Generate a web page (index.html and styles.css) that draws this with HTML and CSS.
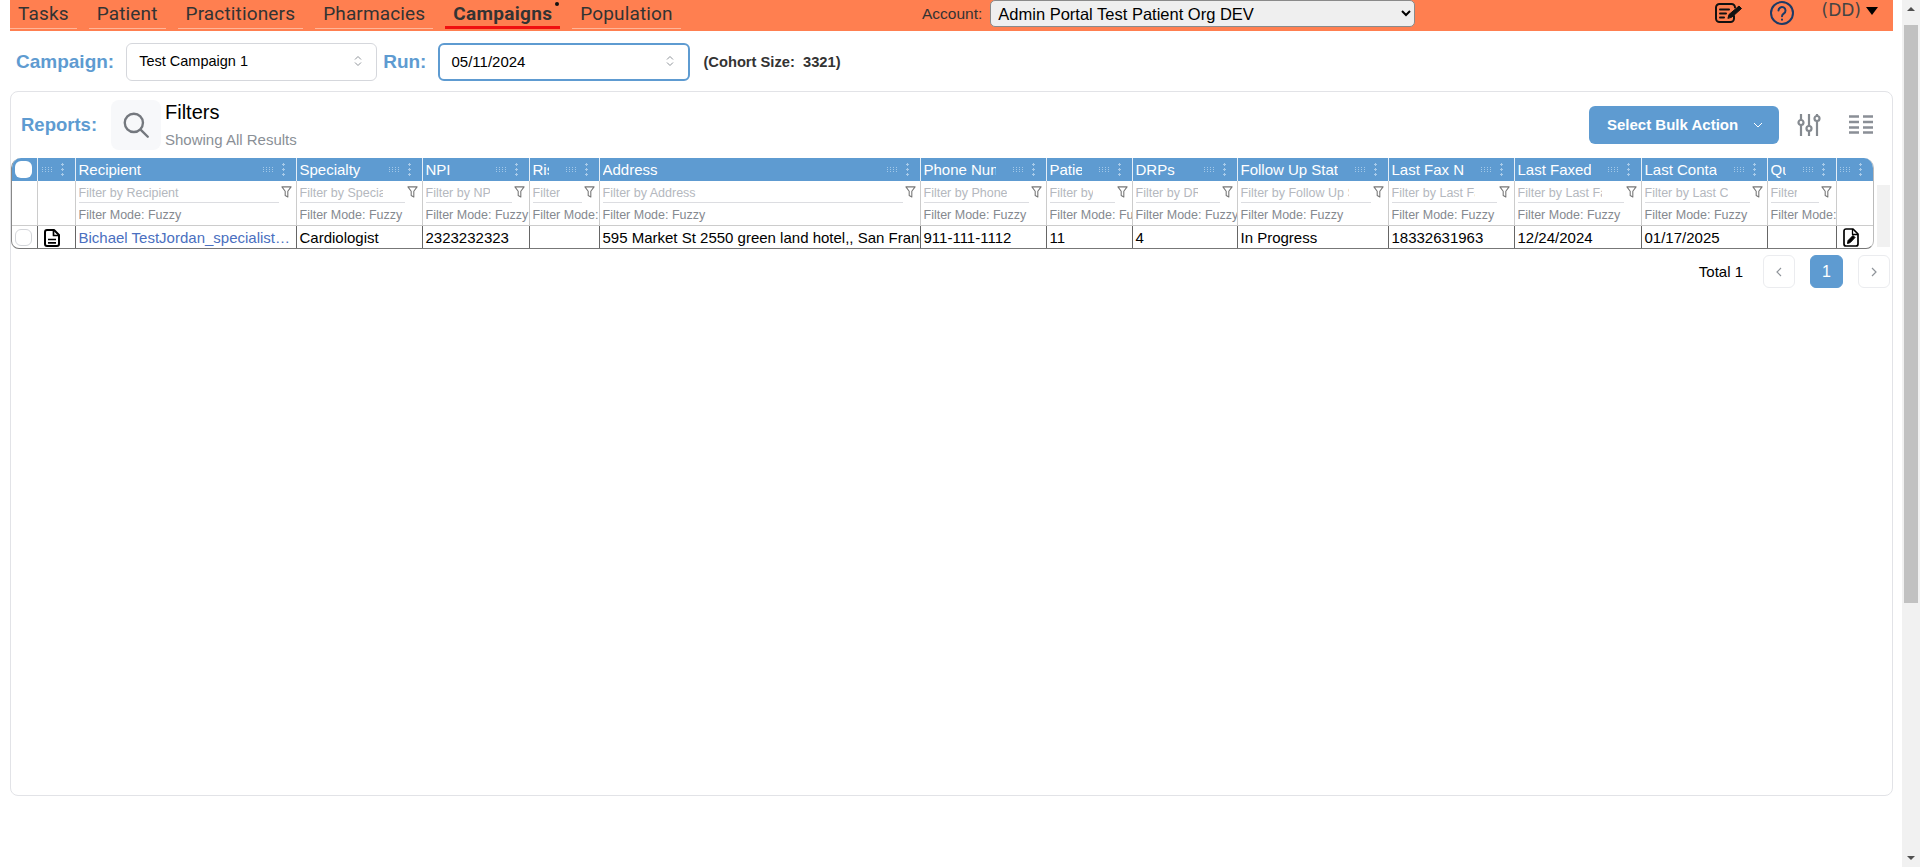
FILE: index.html
```html
<!DOCTYPE html>
<html lang="en">

<head>
  <meta charset="utf-8">
  <title>Campaigns</title>
  <link rel="icon" href="data:,">
  <link rel="stylesheet" href="styles.css">
</head>

<body>
  <svg class="defs" width="0" height="0" aria-hidden="true">
    <symbol id="funnel" viewBox="0 0 10 11">
      <path d="M.8.8H9.200L6.200 4.800V10L3.800 8.800V4.800z" fill="none" stroke="#777" stroke-width="1" stroke-linejoin="round" />
    </symbol>
  </svg>

  <div class="page">
    <div class="main">
      <header class="topbar">
        <nav class="nav">
          <a class="nav-link">Tasks</a>
          <a class="nav-link">Patient</a>
          <a class="nav-link">Practitioners</a>
          <a class="nav-link">Pharmacies</a>
          <a class="nav-link active">Campaigns<span class="nav-dot"></span></a>
          <a class="nav-link">Population</a>
        </nav>
        <div class="account">
          <label for="account-select">Account:</label>
          <select id="account-select">
            <option>Admin Portal Test Patient Org DEV</option>
          </select>
        </div>
        <div class="top-icons">
          <svg class="icon-note" width="30" height="20" viewBox="0 0 30 20" fill="none" stroke="#111" stroke-width="2" stroke-linecap="round" stroke-linejoin="round">
            <path d="M21 4.500V4.500a3.500 3.500 0 0 0-3.500-3.500H5.500A3.500 3.500 0 0 0 2 4.500V15.500A3.500 3.500 0 0 0 5.500 19H16.500a3.500 3.500 0 0 0 3.500-3.500V13" />
            <path d="M6 6.500H15M6 10.500H12M6 14.500H10" />
            <path d="M14 15l1-3.500L25 3l2.500 2.500-9.500 8.500z" fill="#111" stroke-width="1" />
          </svg>
          <svg class="icon-help" width="24" height="24" viewBox="0 0 24 24" fill="none" stroke="#1d3a66" stroke-width="2" stroke-linecap="round">
            <circle cx="12" cy="12" r="11" />
            <path d="M8.500 9.500a3.500 3.500 0 1 1 5.500 2.900c-1.200.8-2 1.400-2 2.800" />
            <path d="M12 18.500v.2" />
          </svg>
          <span class="user">(DD)</span>
          <span class="user-caret"></span>
        </div>
      </header>

      <div class="selectors">
        <span class="sel-label">Campaign:</span>
        <div class="select-box campaign-box">
          <span>Test Campaign 1</span>
          <svg width="8" height="12" viewBox="0 0 8 12" fill="none" stroke="#8f949a" stroke-width="1">
            <path d="M1 4.500L4 1.500L7 4.500M1 7.500L4 10.500L7 7.500" />
          </svg>
        </div>
        <span class="sel-label">Run:</span>
        <div class="select-box run-box">
          <span>05/11/2024</span>
          <svg width="8" height="12" viewBox="0 0 8 12" fill="none" stroke="#8f949a" stroke-width="1">
            <path d="M1 4.500L4 1.500L7 4.500M1 7.500L4 10.500L7 7.500" />
          </svg>
        </div>
        <span class="cohort">(Cohort Size:&nbsp; 3321)</span>
      </div>

      <section class="panel">
        <div class="panel-head">
          <span class="reports-label">Reports:</span>
          <div class="search-tile">
            <svg width="30" height="30" viewBox="0 0 28 28" fill="none" stroke="#74787e" stroke-width="2.200" stroke-linecap="round">
              <circle cx="12" cy="12" r="8.500" />
              <path d="M18.500 18.500L25 25" />
            </svg>
          </div>
          <div class="filter-text">
            <div class="filter-title">Filters</div>
            <div class="filter-sub">Showing All Results</div>
          </div>
          <button class="bulk-btn"><span class="bulk-text">Select Bulk Action</span>
            <svg width="10" height="6" viewBox="0 0 10 6" fill="none" stroke="#fff" stroke-width="1">
              <path d="M1 1l4 4 4-4" />
            </svg>
          </button>
          <svg class="icon-sliders" width="24" height="24" viewBox="0 0 24 24" fill="none" stroke="#858a90" stroke-width="2.200">
            <path d="M4 1V7M4 12V23M12 1V13M12 18V23M20 1V3M20 8V23" />
            <circle cx="4" cy="9.500" r="2.500" />
            <circle cx="12" cy="15.500" r="2.500" />
            <circle cx="20" cy="5.500" r="2.500" />
          </svg>
          <svg class="icon-list" width="24" height="19" viewBox="0 0 24 19" fill="none" stroke="#8a8f96" stroke-width="2.500">
            <path d="M0 1.500H10M14 1.500H24M0 7H10M14 7H24M0 12.500H10M14 12.500H24M0 17.500H10M14 17.500H24" />
          </svg>
        </div>

        <div class="table-row">
          <div class="table-wrap">
            <table class="grid">
              <colgroup>
                <col class="c-check"><col class="c-doc"><col class="c-recipient"><col class="c-specialty">
                <col class="c-npi"><col class="c-risk"><col class="c-address"><col class="c-phone">
                <col class="c-patients"><col class="c-drps"><col class="c-follow"><col class="c-fax">
                <col class="c-faxed"><col class="c-contact"><col class="c-qu"><col class="c-last">
              </colgroup>
              <thead>
                <tr class="head-row">
                  <th class="check-cell"><span class="check check-head"></span></th>
                  <th><div class="th-in"><span class="th-title"></span><i class="grip"></i><i class="kebab"></i></div></th>
                  <th><div class="th-in"><span class="th-title">Recipient</span><i class="grip"></i><i class="kebab"></i></div></th>
                  <th><div class="th-in"><span class="th-title">Specialty</span><i class="grip"></i><i class="kebab"></i></div></th>
                  <th><div class="th-in"><span class="th-title">NPI</span><i class="grip"></i><i class="kebab"></i></div></th>
                  <th><div class="th-in"><span class="th-title">Risk</span><i class="grip"></i><i class="kebab"></i></div></th>
                  <th><div class="th-in"><span class="th-title">Address</span><i class="grip"></i><i class="kebab"></i></div></th>
                  <th><div class="th-in"><span class="th-title">Phone Number</span><i class="grip"></i><i class="kebab"></i></div></th>
                  <th><div class="th-in"><span class="th-title">Patients</span><i class="grip"></i><i class="kebab"></i></div></th>
                  <th><div class="th-in"><span class="th-title">DRPs</span><i class="grip"></i><i class="kebab"></i></div></th>
                  <th><div class="th-in"><span class="th-title">Follow Up Status</span><i class="grip"></i><i class="kebab"></i></div></th>
                  <th><div class="th-in"><span class="th-title">Last Fax Number</span><i class="grip"></i><i class="kebab"></i></div></th>
                  <th><div class="th-in"><span class="th-title">Last Faxed</span><i class="grip"></i><i class="kebab"></i></div></th>
                  <th><div class="th-in"><span class="th-title">Last Contacted</span><i class="grip"></i><i class="kebab"></i></div></th>
                  <th><div class="th-in"><span class="th-title">Queue</span><i class="grip"></i><i class="kebab"></i></div></th>
                  <th class="th-end"><div class="th-in"><span class="th-title"></span><i class="grip"></i><i class="kebab"></i></div></th>
                </tr>
                <tr class="filter-row">
                  <td></td>
                  <td></td>
                  <td><div class="f-line"><input class="f-input" placeholder="Filter by Recipient"><svg class="funnel"><use href="#funnel" /></svg></div><div class="f-mode">Filter Mode: Fuzzy</div></td>
                  <td><div class="f-line"><input class="f-input" placeholder="Filter by Specialty"><svg class="funnel"><use href="#funnel" /></svg></div><div class="f-mode">Filter Mode: Fuzzy</div></td>
                  <td><div class="f-line"><input class="f-input" placeholder="Filter by NPI"><svg class="funnel"><use href="#funnel" /></svg></div><div class="f-mode">Filter Mode: Fuzzy</div></td>
                  <td><div class="f-line"><input class="f-input" placeholder="Filter by Risk"><svg class="funnel"><use href="#funnel" /></svg></div><div class="f-mode">Filter Mode: Fuzzy</div></td>
                  <td><div class="f-line"><input class="f-input" placeholder="Filter by Address"><svg class="funnel"><use href="#funnel" /></svg></div><div class="f-mode">Filter Mode: Fuzzy</div></td>
                  <td><div class="f-line"><input class="f-input" placeholder="Filter by Phone Number"><svg class="funnel"><use href="#funnel" /></svg></div><div class="f-mode">Filter Mode: Fuzzy</div></td>
                  <td><div class="f-line"><input class="f-input" placeholder="Filter by Patients"><svg class="funnel"><use href="#funnel" /></svg></div><div class="f-mode">Filter Mode: Fuzzy</div></td>
                  <td><div class="f-line"><input class="f-input" placeholder="Filter by DRPs"><svg class="funnel"><use href="#funnel" /></svg></div><div class="f-mode">Filter Mode: Fuzzy</div></td>
                  <td><div class="f-line"><input class="f-input" placeholder="Filter by Follow Up Status"><svg class="funnel"><use href="#funnel" /></svg></div><div class="f-mode">Filter Mode: Fuzzy</div></td>
                  <td><div class="f-line"><input class="f-input" placeholder="Filter by Last Fax Number"><svg class="funnel"><use href="#funnel" /></svg></div><div class="f-mode">Filter Mode: Fuzzy</div></td>
                  <td><div class="f-line"><input class="f-input" placeholder="Filter by Last Faxed"><svg class="funnel"><use href="#funnel" /></svg></div><div class="f-mode">Filter Mode: Fuzzy</div></td>
                  <td><div class="f-line"><input class="f-input" placeholder="Filter by Last Contacted"><svg class="funnel"><use href="#funnel" /></svg></div><div class="f-mode">Filter Mode: Fuzzy</div></td>
                  <td><div class="f-line"><input class="f-input" placeholder="Filter by Queue"><svg class="funnel"><use href="#funnel" /></svg></div><div class="f-mode">Filter Mode: Fuzzy</div></td>
                  <td></td>
                </tr>
              </thead>
              <tbody>
                <tr class="data-row">
                  <td class="check-cell"><span class="check"></span></td>
                  <td class="icon-cell">
                    <svg width="16" height="18" viewBox="0 0 16 18" fill="none" stroke="#000" stroke-width="2" stroke-linejoin="round">
                      <path d="M3 1H10L15 6V15a2 2 0 0 1-2 2H3a2 2 0 0 1-2-2V3a2 2 0 0 1 2-2z" />
                      <path d="M9.500 1V6.500H15M4 10.500H12M4 13.800H12" stroke-width="1.700" />
                    </svg>
                  </td>
                  <td><span class="cell-link">Bichael TestJordan_specialist_test</span></td>
                  <td>Cardiologist</td>
                  <td>2323232323</td>
                  <td></td>
                  <td>595 Market St 2550 green land hotel,, San Francisco, CA 94105</td>
                  <td>911-111-1112</td>
                  <td>11</td>
                  <td>4</td>
                  <td>In Progress</td>
                  <td>18332631963</td>
                  <td>12/24/2024</td>
                  <td>01/17/2025</td>
                  <td></td>
                  <td class="icon-cell">
                    <svg width="16" height="19" viewBox="0 0 16 19" fill="none" stroke="#000" stroke-width="1.700" stroke-linejoin="round">
                      <path d="M3 1H10L15 6V16a2 2 0 0 1-2 2H3a2 2 0 0 1-2-2V3a2 2 0 0 1 2-2z" />
                      <path d="M9.500 1V6.500H15" stroke-width="1.300" />
                      <path d="M4.500 15.500l.6-3L10 7.500l2 2-4.800 5.100z" fill="#000" stroke-width="1" />
                    </svg>
                  </td>
                </tr>
              </tbody>
            </table>
          </div>
          <div class="table-scroll"></div>
        </div>

        <div class="pager">
          <span class="pager-total">Total 1</span>
          <button class="pg-btn">
            <svg width="6" height="10" viewBox="0 0 6 10" fill="none" stroke="#8f949a" stroke-width="1.200"><path d="M5 1L1 5l4 4" /></svg>
          </button>
          <button class="pg-btn pg-current">1</button>
          <button class="pg-btn">
            <svg width="6" height="10" viewBox="0 0 6 10" fill="none" stroke="#8f949a" stroke-width="1.200"><path d="M1 1l4 4-4 4" /></svg>
          </button>
        </div>
      </section>
    </div>

    <div class="scrollbar" aria-hidden="true">
      <span class="sb-up"></span>
      <div class="sb-track"><div class="sb-thumb"></div></div>
      <span class="sb-down"></span>
    </div>
  </div>
</body>

</html>
```

FILE: styles.css
```css
html,
body {
  margin: 0;
  height: 100%;
  overflow: hidden;
  background: #fff;
  font-family: "Liberation Sans", Arial, sans-serif;
  color: #000;
}

.defs {
  position: absolute;
}

.page {
  display: flex;
  height: 867px;
}

.main {
  width: 1902px;
  padding: 0 9px 0 10px;
  box-sizing: border-box;
}

/* top bar */
.topbar {
  display: flex;
  height: 31px;
  background: #ff7f50;
  position: relative;
}

.nav {
  display: flex;
  gap: 12px;
  width: 912px;
}

.nav-link {
  position: relative;
  height: 28px;
  padding: 0 8px;
  line-height: 27px;
  font-family: Roboto, sans-serif;
  font-size: 19px;
  letter-spacing: .15px;
  color: #333;
  border-bottom: 1px solid #ffb699;
}

.nav-link.active {
  font-weight: bold;
  height: 26px;
  letter-spacing: .3px;
  border-bottom: 3px solid #f01010;
}

.nav-dot {
  position: absolute;
  right: 1px;
  top: 2px;
  width: 4px;
  height: 4px;
  border-radius: 50%;
  background: #111;
}

.account {
  display: flex;
  align-items: flex-start;
  gap: 8px;
  font-size: 15.500px;
  color: #333;
}

.account label {
  line-height: 28px;
}

.account select {
  width: 425px;
  height: 27px;
  padding: 0 3px;
  font-family: "Liberation Sans", sans-serif;
  font-size: 16.500px;
  color: #000;
  background-color: #efefef;
  border: 1px solid #8a8a8a;
  border-radius: 5px;
}

.top-icons {
  display: flex;
  align-items: flex-start;
  justify-content: flex-end;
  flex: 1;
  padding-right: 15px;
}

.icon-note {
  margin-top: 3px;
  margin-right: 26px;
}

.icon-help {
  margin-top: 1px;
  margin-right: 28px;
}

.user {
  font-family: "DejaVu Sans", sans-serif;
  font-size: 17px;
  line-height: 20px;
  color: #444;
}

.user-caret {
  margin-top: 7px;
  margin-left: 5px;
  border-left: 6.500px solid transparent;
  border-right: 6.500px solid transparent;
  border-top: 8px solid #000;
}

/* campaign and run row */
.selectors {
  display: flex;
  align-items: center;
  height: 38px;
  margin-top: 12px;
}

.sel-label {
  font-size: 19px;
  font-weight: bold;
  color: #5e9bd1;
}

.sel-label:first-child {
  margin-left: 6px;
  margin-right: 12px;
}

.select-box {
  display: flex;
  align-items: center;
  justify-content: space-between;
  height: 38px;
  box-sizing: border-box;
  padding: 0 14px 2px 12px;
  background: #fff;
  border: 1px solid #d5d7dc;
  border-radius: 6px;
  font-size: 14.500px;
}

.campaign-box {
  width: 251px;
  margin-right: 6px;
}

.run-box {
  width: 252px;
  margin-left: 12px;
  padding-left: 11px;
  border: 2px solid #5e9bd1;
  margin-right: 13px;
  font-size: 15px;
}

.cohort {
  font-size: 14.700px;
  font-weight: bold;
  color: #333;
}

/* panel */
.panel {
  margin-top: 10px;
  height: 705px;
  box-sizing: border-box;
  border: 1px solid #e2e3e7;
  border-radius: 8px;
}

.panel-head {
  display: flex;
  align-items: flex-start;
  height: 50px;
  margin-top: 8px;
}

.reports-label {
  margin-left: 10px;
  width: 90px;
  font-size: 18.500px;
  font-weight: bold;
  line-height: 50px;
  color: #5e9bd1;
}

.search-tile {
  display: flex;
  align-items: center;
  justify-content: center;
  width: 50px;
  height: 50px;
  background: #f7f8fa;
  border-radius: 8px;
}

.filter-text {
  margin-left: 4px;
  flex: 1;
}

.filter-title {
  margin-top: -1px;
  font-size: 20px;
  line-height: 26px;
}

.filter-sub {
  margin-top: 6px;
  font-size: 15px;
  line-height: 18px;
  color: #8a8f96;
}

.bulk-btn {
  display: flex;
  align-items: center;
  gap: 15px;
  width: 190px;
  height: 38px;
  margin-top: 6px;
  padding: 0 0 0 18px;
  background: #5e9bd1;
  border: 0;
  border-radius: 6px;
  font-family: "Liberation Sans", sans-serif;
  font-size: 15px;
  font-weight: bold;
  color: #fff;
}

.bulk-text {
  margin-bottom: 2px;
}

.icon-sliders {
  margin-top: 13px;
  margin-left: 18px;
}

.icon-list {
  margin-top: 15px;
  margin-left: 28px;
  margin-right: 19px;
}

/* table */
.table-row {
  display: flex;
  gap: 3px;
  margin-top: 8px;
}

.table-wrap {
  width: 1863px;
  border-left: 1px solid #888;
  border-right: 1px solid #bbb;
  border-bottom: 1px solid #777;
  border-radius: 10px 10px 8px 8px;
  overflow: hidden;
  box-sizing: border-box;
}

.table-scroll {
  width: 13px;
  height: 62px;
  margin-top: 27px;
  background: #f1f1f1;
}

.grid {
  table-layout: fixed;
  width: 1861px;
  border-collapse: collapse;
  font-size: 15px;
}

.c-check { width: 25px; }
.c-doc { width: 38px; }
.c-recipient { width: 221px; }
.c-specialty { width: 126px; }
.c-npi { width: 107px; }
.c-risk { width: 70px; }
.c-address { width: 321px; }
.c-phone { width: 126px; }
.c-patients { width: 86px; }
.c-drps { width: 105px; }
.c-follow { width: 151px; }
.c-fax { width: 126px; }
.c-faxed { width: 127px; }
.c-contact { width: 126px; }
.c-qu { width: 69px; }
.c-last { width: 37px; }

.head-row th {
  height: 23px;
  padding: 0;
  background: #5e9bd1;
  border-left: 1px solid #e4eef7;
  font-weight: normal;
  color: #fff;
  text-align: left;
}

.head-row th:first-child {
  border-left: 0;
  text-align: center;
  padding-right: 2px;
}

.th-in {
  display: flex;
  align-items: center;
  padding-left: 3px;
}

.th-title {
  flex: 1;
  min-width: 0;
  margin-right: 17px;
  overflow: hidden;
  white-space: nowrap;
}

.th-title:empty {
  margin-right: 0;
}

/* four by three drag handle */
.grip {
  width: 10px;
  height: 5px;
  margin-right: 9px;
  flex: none;
  background: repeating-linear-gradient(90deg, #a3c8e8 0 1px, transparent 1px 3px);
  -webkit-mask-image: repeating-linear-gradient(180deg, #000 0 1px, transparent 1px 2px);
  mask-image: repeating-linear-gradient(180deg, #000 0 1px, transparent 1px 2px);
}

.kebab {
  width: 3px;
  height: 13px;
  margin-right: 11px;
  flex: none;
  background-image: radial-gradient(circle at 1.500px 1.500px, #a9cbe9 1px, transparent 1.100px);
  background-size: 3px 5px;
}

.filter-row td {
  height: 44px;
  padding: 0;
  border-left: 1px solid #ccc;
  vertical-align: top;
}

.filter-row td:first-child {
  border-left: 0;
}

.f-line {
  display: flex;
  height: 22px;
  margin-left: 3px;
}

.f-input {
  display: block;
  flex: 1;
  width: 0;
  min-width: 0;
  height: 22px;
  margin: 0 2px 0 0;
  padding: 2px 22px 0 0;
  font-family: "Liberation Sans", sans-serif;
  font-size: 12.500px;
  background: transparent;
  border: 0;
  border-bottom: 1px solid #dcdde1;
  box-sizing: border-box;
}

.f-input::placeholder {
  color: #b4b8be;
  opacity: 1;
}

.funnel {
  width: 11px;
  height: 12px;
  margin: 5px 4px 0 0;
  flex: none;
}

.f-mode {
  margin-top: 5px;
  margin-left: 3px;
  font-size: 12.500px;
  line-height: 14px;
  color: #85898f;
  white-space: nowrap;
  overflow: hidden;
}

.data-row td {
  height: 21px;
  padding: 0 3px;
  border-top: 1px solid #ccc;
  border-left: 1px solid #666;
  white-space: nowrap;
  overflow: hidden;
}

.data-row td:first-child {
  border-left: 0;
  padding: 0 2px 0 0;
}

.data-row .icon-cell {
  padding: 1px 0 0 6px;
  line-height: 0;
}

.cell-link {
  display: block;
  color: #4a6fc0;
  overflow: hidden;
  text-overflow: ellipsis;
}

.check-cell {
  text-align: center;
  line-height: 0;
}

.check {
  display: inline-block;
  width: 17px;
  height: 17px;
  box-sizing: border-box;
  border: 1px solid #d3d5d9;
  border-radius: 6px;
  background: #fff;
}

.check-head {
  border: 0;
}

/* pagination */
.pager {
  display: flex;
  align-items: center;
  justify-content: flex-end;
  margin-top: 6px;
  margin-right: 2px;
}

.pager-total {
  margin-right: 20px;
  font-size: 15px;
}

.pg-btn {
  display: flex;
  align-items: center;
  justify-content: center;
  width: 32px;
  height: 33px;
  margin-left: 15px;
  padding: 0;
  background: #fff;
  border: 1px solid #ebecef;
  border-radius: 6px;
  font-family: "Liberation Sans", sans-serif;
}

.pg-btn:nth-child(2) {
  margin-left: 0;
}

.pg-current {
  width: 33px;
  background: #5e9bd1;
  border-color: #5e9bd1;
  color: #fff;
  font-size: 16px;
}

/* window scrollbar */
.scrollbar {
  display: flex;
  flex-direction: column;
  align-items: center;
  width: 18px;
  height: 867px;
  background: #f1f1f1;
}

.sb-up,
.sb-down {
  flex: none;
  margin: 7px 0;
  border-left: 4px solid transparent;
  border-right: 4px solid transparent;
}

.sb-up {
  border-bottom: 4px solid #505050;
}

.sb-down {
  border-top: 4px solid #505050;
}

.sb-track {
  flex: 1;
  width: 100%;
  padding-top: 7px;
  box-sizing: border-box;
}

.sb-thumb {
  width: 14px;
  height: 578px;
  margin: 0 auto;
  background: #c1c1c1;
}
```
